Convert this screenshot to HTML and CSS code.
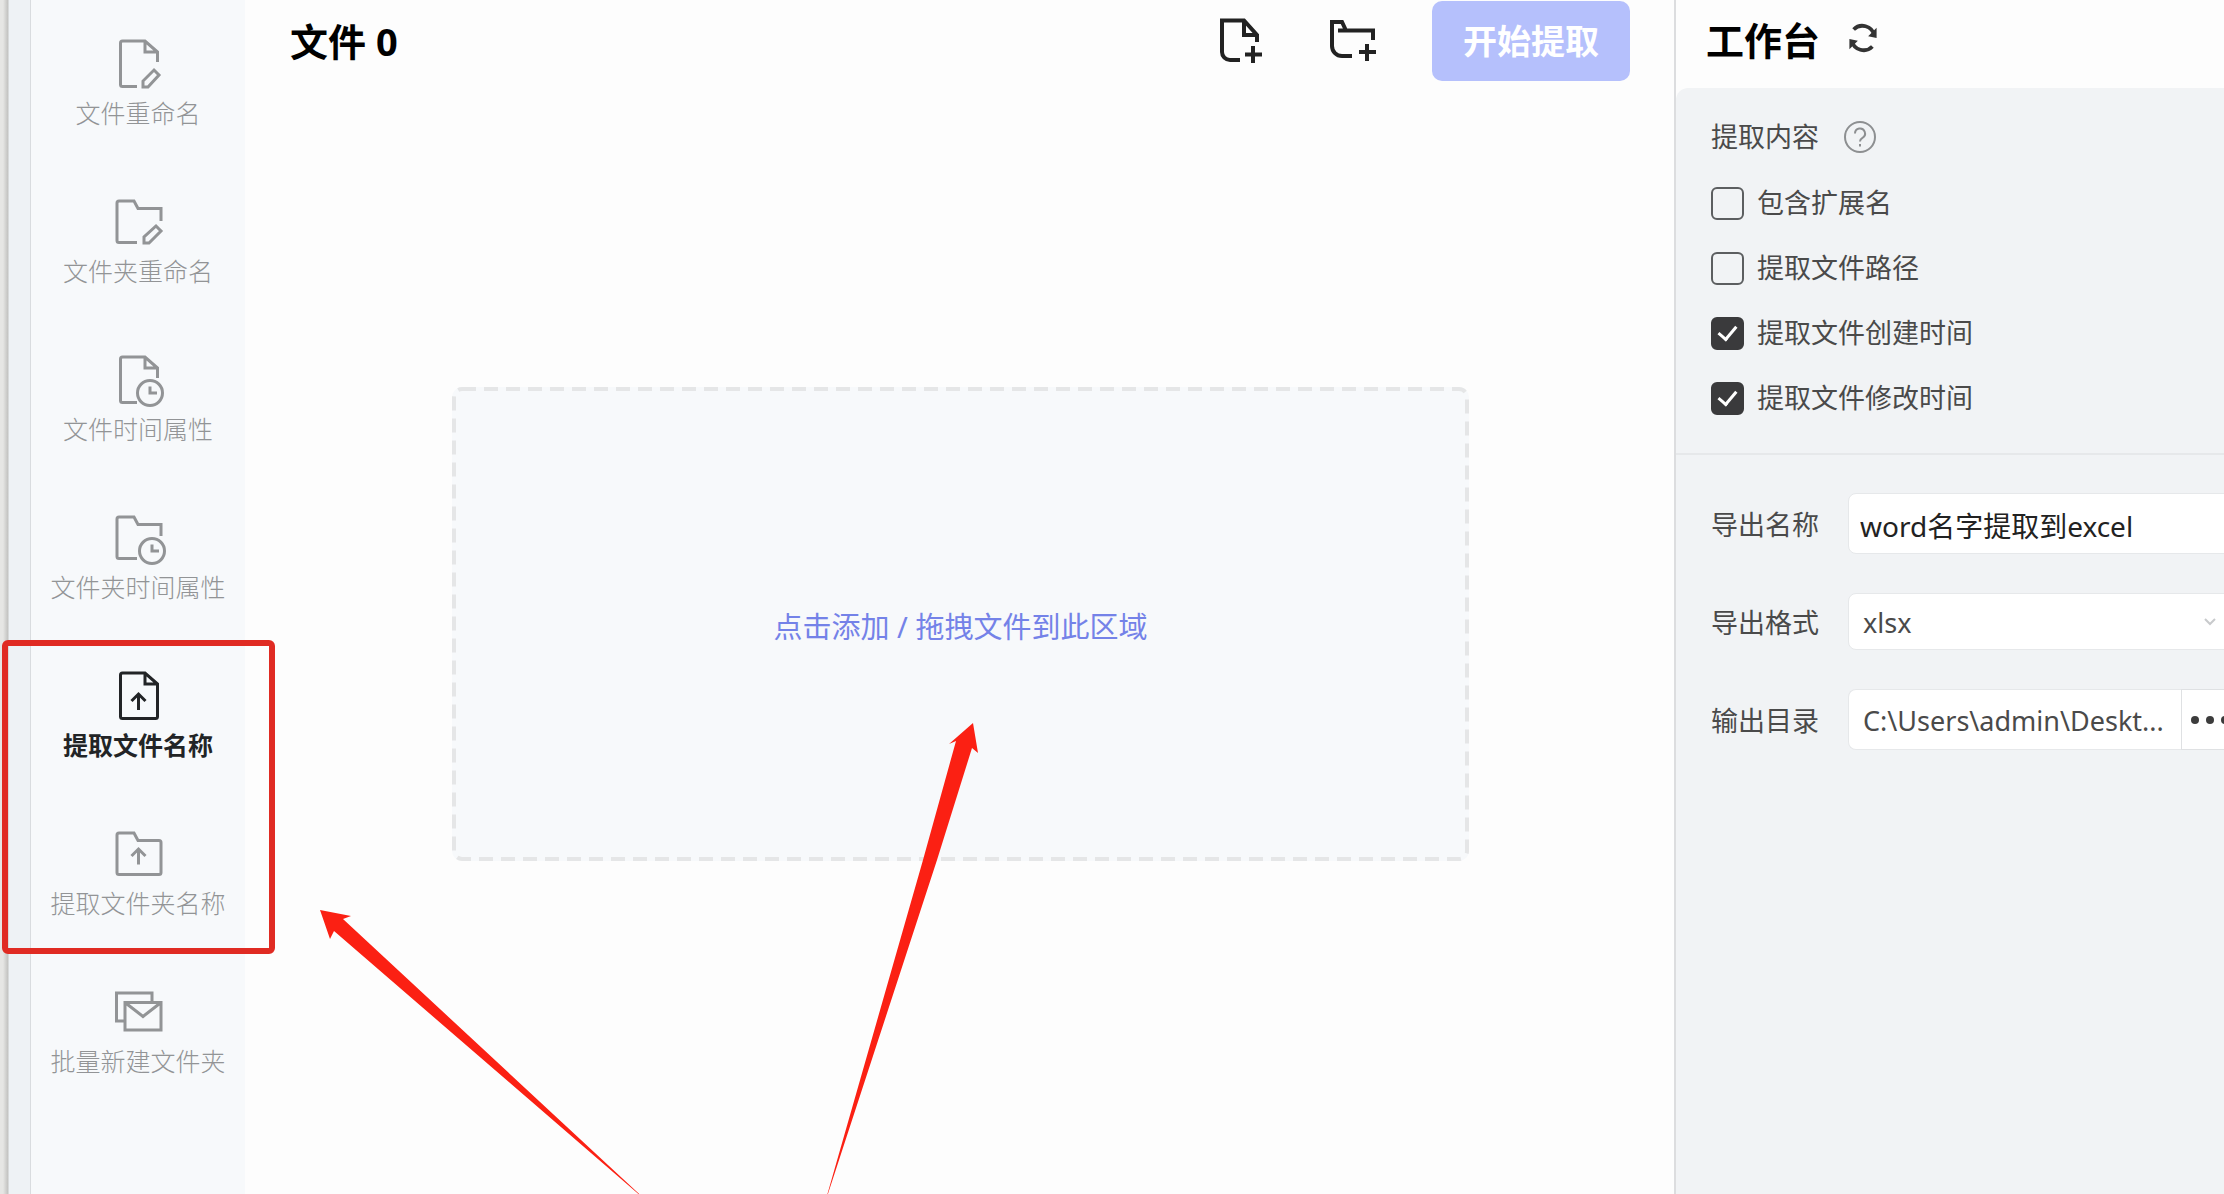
FILE: index.html
```html
<!DOCTYPE html>
<html lang="zh-CN">
<head>
<meta charset="utf-8">
<meta name="viewport" content="width=device-width, initial-scale=1">
<title>提取文件名称</title>
<link rel="stylesheet" href="styles.css">
</head>
<body>
<div class="app">
  <div class="window-edge"></div>

  <nav class="sidebar">
    <button class="nav-item" type="button">
      <svg class="nav-icon" viewBox="0 0 56 56"><path d="M27 50.500H12.500a2 2 0 0 1-2-2V7a2 2 0 0 1 2-2H35l12.500 11v10M35 5v11h12.500M33 51v-6l11-11 5 5-11 12z"/></svg>
      <span>文件重命名</span>
    </button>
    <button class="nav-item" type="button">
      <svg class="nav-icon" viewBox="0 0 56 56"><path d="M27 48.500H9a2 2 0 0 1-2-2V9a2 2 0 0 1 2-2h15l4 7.500h23V27M34 49v-6l12-11 5 5-12 12z"/></svg>
      <span>文件夹重命名</span>
    </button>
    <button class="nav-item" type="button">
      <svg class="nav-icon" viewBox="0 0 56 56"><path d="M27 50.500H12.500a2 2 0 0 1-2-2V7a2 2 0 0 1 2-2H35l12.500 11v10M35 5v11h12.500"/><circle cx="40" cy="41" r="12.500"/><path d="M40 34.500V41h7"/></svg>
      <span>文件时间属性</span>
    </button>
    <button class="nav-item" type="button">
      <svg class="nav-icon" viewBox="0 0 56 56"><path d="M27 48.500H9a2 2 0 0 1-2-2V9a2 2 0 0 1 2-2h15l4 7.500h23V26"/><circle cx="42" cy="41" r="12.500"/><path d="M42 34.500V41h7"/></svg>
      <span>文件夹时间属性</span>
    </button>
    <button class="nav-item is-active" type="button" aria-current="page">
      <svg class="nav-icon" viewBox="0 0 56 56"><path d="M35 5H12.500a2 2 0 0 0-2 2v41.500a2 2 0 0 0 2 2H45.500a2 2 0 0 0 2-2V16zM35 5v11h12.500M28.500 42V26M21.500 33l7-7 7 7"/></svg>
      <span>提取文件名称</span>
    </button>
    <button class="nav-item" type="button">
      <svg class="nav-icon" viewBox="0 0 56 56"><path d="M9 7h15l4 7.500h21a2 2 0 0 1 2 2v30a2 2 0 0 1-2 2H9a2 2 0 0 1-2-2V9a2 2 0 0 1 2-2zM28.500 38.500V23M21.500 30l7-7 7 7"/></svg>
      <span>提取文件夹名称</span>
    </button>
    <button class="nav-item" type="button">
      <svg class="nav-icon" viewBox="0 0 56 56"><path d="M15 37H6.500V9H42v9M15 18.500h36V46H15zM15 18.500l18 14 18-14"/></svg>
      <span>批量新建文件夹</span>
    </button>
  </nav>

  <main class="main">
    <header class="main-head">
      <h1 class="title">文件 0</h1>
      <div class="tools">
        <button class="icon-button" type="button" aria-label="添加文件">
          <svg class="tool-icon" viewBox="0 0 48 48"><path d="M23 43H13a8 8 0 0 1-8-8V3.500h22L40 18v7M27 4v14h13M36 29v17M28 37.500h17"/></svg>
        </button>
        <button class="icon-button" type="button" aria-label="添加文件夹">
          <svg class="tool-icon" viewBox="0 0 48 48"><path d="M25 39H15a10 10 0 0 1-10-10V5h10l4 8.500M11 13.500h35V23M40 27v17M32 35h17"/></svg>
        </button>
      </div>
      <button class="start" type="button">开始提取</button>
    </header>
    <button class="dropzone" type="button">
      <svg class="dropzone-outline" aria-hidden="true"><rect class="dash" x="2" y="2" rx="8"/></svg>
      <span>点击添加 / 拖拽文件到此区域</span>
    </button>
  </main>

  <aside class="panel">
    <header class="panel-head">
      <h2 class="title">工作台</h2>
      <button class="icon-button refresh" type="button" aria-label="刷新">
        <svg class="refresh-icon" viewBox="0 0 32 32"><path d="M6 7a13 13 0 0 1 22 6M26 25A13 13 0 0 1 4 19"/><path class="tip" d="M30.500 5v11l-9-2zM1.500 28V17l9 2z"/></svg>
      </button>
    </header>
    <div class="panel-body">
      <section class="options">
        <div class="options-title">
          <span>提取内容</span>
          <svg class="help-icon" viewBox="0 0 34 34"><circle cx="17" cy="17" r="15"/><path d="M12 13.500a5 5 0 1 1 7.500 4.300c-1.800 1-2.500 1.800-2.500 3.700M17 24v2.500"/></svg>
        </div>
        <label class="check"><input type="checkbox"><span>包含扩展名</span></label>
        <label class="check"><input type="checkbox"><span>提取文件路径</span></label>
        <label class="check"><input type="checkbox" checked><span>提取文件创建时间</span></label>
        <label class="check"><input type="checkbox" checked><span>提取文件修改时间</span></label>
      </section>
      <form class="export">
        <label for="name">导出名称</label>
        <input class="field field-name" id="name" type="text" value="word名字提取到excel">
        <label for="format">导出格式</label>
        <div class="select-wrap">
          <select class="field" id="format"><option>xlsx</option></select>
          <svg class="chevron" viewBox="0 0 12 8"><path d="M1 1l5 5 5-5"/></svg>
        </div>
        <label for="dir">输出目录</label>
        <div class="dir">
          <input class="field field-dir" id="dir" type="text" value="C:\Users\admin\Deskt..." readonly>
          <button class="browse" type="button" aria-label="选择目录"><i></i><i></i><i></i></button>
        </div>
      </form>
    </div>
  </aside>

  <svg class="annotations" width="1000" height="1240" viewBox="0 0 1000 1240" aria-hidden="true">
    <rect x="5" y="643" width="267" height="308" rx="3"/>
    <path d="M320 910l31 6-8 3L650 1204 334 931l-4 8zM973 723l5 30-6-5L937 860 824 1206 923 860 956 741l-7 3z"/>
  </svg>
</div>
</body>
</html>
```
FILE: styles.css
```css
* {
  box-sizing: border-box;
}

body {
  margin: 0;
  background: #fdfdfd;
  color: #4a4a4a;
  font: 27px/36px "Noto Sans", "Noto Sans CJK SC", sans-serif;
}

button,
input,
select {
  margin: 0;
  font: inherit;
  color: inherit;
}

button {
  padding: 0;
  border: 0;
  background: none;
}

svg {
  display: block;
  fill: none;
  stroke: currentColor;
}

.app {
  position: relative;
  display: grid;
  grid-template-columns: 31px 214px 1fr 550px;
  min-height: 100vh;
  overflow: hidden;
}

.window-edge {
  border-right: 1px solid #d9dcdf;
  background: linear-gradient(90deg, #e6e6e4 0 3px, #c2c2c0 8px, #eef2f5 9px);
}

/* Tool list */
.sidebar {
  display: flex;
  flex-direction: column;
  gap: 63px;
  padding-top: 36px;
  background: #f7f9fb;
}

.nav-item {
  display: flex;
  flex-direction: column;
  align-items: center;
  gap: 3px;
  color: #929496;
  font-size: 25px;
  font-weight: 300;
}

.nav-icon {
  width: 56px;
  height: 56px;
  stroke-width: 3;
}

.nav-item.is-active {
  color: #222426;
  font-weight: 700;
}

/* File area */
.main-head,
.panel-head {
  display: flex;
  align-items: center;
}

.main-head {
  gap: 57px;
  padding: 1px 44px 0 45px;
}

.title {
  margin: 0;
  color: #000;
  font-size: 38px;
  line-height: 48px;
  font-weight: 700;
}

.main-head .title {
  flex: 1;
}

.tools {
  display: flex;
  gap: 62px;
}

.tool-icon {
  width: 48px;
  height: 48px;
  stroke-width: 4;
  color: #222;
  overflow: visible;
}

.start {
  width: 198px;
  height: 80px;
  border-radius: 10px;
  background: #b5c0fc;
  color: #fff;
  font-size: 34px;
  font-weight: 700;
}

.dropzone {
  position: relative;
  display: block;
  width: calc(100% - 412px);
  height: 474px;
  margin: 306px 205px 0 207px;
  padding-top: 5px;
  border-radius: 10px;
  background: #f7f9fb;
  color: #7482e8;
  font-size: 29px;
}

.dropzone-outline {
  position: absolute;
  inset: 0;
  width: 100%;
  height: 100%;
}

.dash {
  width: calc(100% - 4px);
  height: calc(100% - 4px);
  stroke: #e5e6e7;
  stroke-width: 4;
  stroke-dasharray: 14 8;
}

/* Workbench */
.panel {
  display: flex;
  flex-direction: column;
  border-left: 2px solid #dcdddf;
  overflow: hidden;
}

.panel-head {
  gap: 28px;
  height: 88px;
  padding: 0 30px 8px;
}

.refresh {
  padding-bottom: 4px;
}

.refresh-icon {
  width: 30px;
  height: 30px;
  color: #333;
  stroke-width: 4;
}

.refresh-icon .tip {
  fill: currentColor;
  stroke: none;
}

.panel-body {
  flex: 1;
  border-top-left-radius: 12px;
  background: #f1f3f5;
}

.options {
  display: flex;
  flex-direction: column;
  gap: 29px;
  padding: 31px 35px 37px;
  border-bottom: 2px solid #e6e8ea;
}

.options-title {
  display: flex;
  align-items: center;
  gap: 24px;
  padding-bottom: 1px;
}

.help-icon {
  width: 34px;
  height: 34px;
  color: #8d8f91;
  stroke-width: 2;
}

.check {
  display: flex;
  align-items: center;
  gap: 13px;
}

.check input {
  appearance: none;
  display: grid;
  place-items: center;
  width: 33px;
  height: 33px;
  border: 2px solid #5c5e60;
  border-radius: 6px;
}

.check input:checked {
  border-color: #3a3a3c;
  background: #3a3a3c;
}

.check input:checked::after {
  content: "";
  width: 8px;
  height: 15px;
  margin-bottom: 4px;
  border: solid #fff;
  border-width: 0 3px 3px 0;
  transform: rotate(40deg);
}

.export {
  display: grid;
  grid-template-columns: 109px 1fr;
  align-items: center;
  column-gap: 28px;
  row-gap: 39px;
  margin-right: -14px;
  padding: 38px 0 38px 35px;
}

.export label {
  padding-top: 2px;
}

.field {
  display: block;
  width: 100%;
  min-width: 0;
  height: 61px;
  padding: 2px 14px 0;
  border: 1px solid #e6e8ea;
  border-radius: 8px;
  background: #fff;
}

.field-name {
  padding: 2px 11px 0;
  color: #222;
  font-size: 28px;
}

.select-wrap {
  display: grid;
  align-items: center;
}

.select-wrap > * {
  grid-area: 1 / 1;
}

select.field {
  height: 57px;
  appearance: none;
}

.chevron {
  width: 12px;
  height: 8px;
  margin-right: 22px;
  justify-self: end;
  color: #c8cacc;
  stroke-width: 2;
  pointer-events: none;
}

.dir {
  display: flex;
}

.field-dir {
  flex: 1;
  border-right: 0;
  border-radius: 8px 0 0 8px;
}

.browse {
  display: flex;
  align-items: center;
  justify-content: center;
  gap: 7px;
  width: 57px;
  border: 1px solid #dfe1e3;
  background: #fff;
}

.browse i {
  width: 8px;
  height: 8px;
  border-radius: 50%;
  background: #3c3c3c;
}

/* Guide marks drawn over the window */
.annotations {
  position: absolute;
  top: 0;
  left: 0;
  pointer-events: none;
}

.annotations rect {
  stroke: #e02b23;
  stroke-width: 6;
}

.annotations path {
  fill: #fb2013;
  stroke: none;
}
```
